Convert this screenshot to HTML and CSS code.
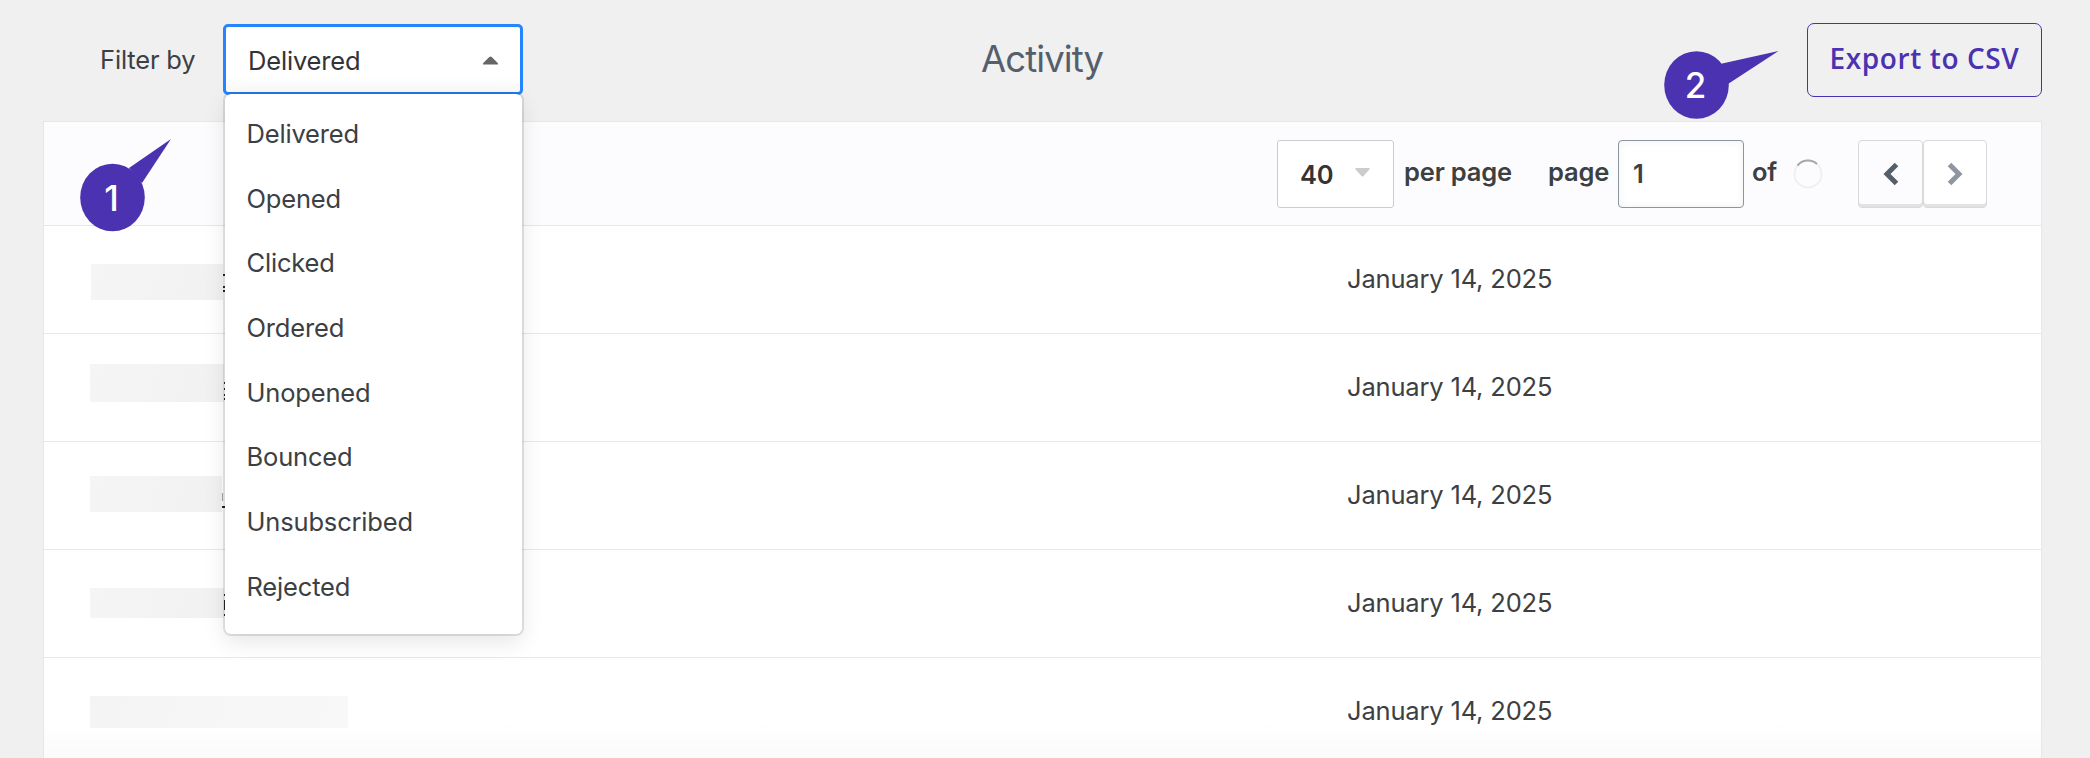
FILE: index.html
```html
<!DOCTYPE html>
<html lang="en">
<head>
<meta charset="utf-8">
<title>Activity</title>
<link rel="stylesheet" href="styles.css">
</head>
<body>
<header class="topbar">
  <div class="filter">
    <span class="filter-label">Filter by</span>
    <div class="select">
      <span class="select-value">Delivered</span>
      <svg class="caret-up" width="15" height="9" viewBox="0 0 15 9"><path d="M0 8Q0 7 1 6.3L6.3 1Q7.5 0 8.7 1L14 6.3Q15 7 15 8V8.500H0Z" fill="#666"/></svg>
      <ul class="menu">
        <li>Delivered</li>
        <li>Opened</li>
        <li>Clicked</li>
        <li>Ordered</li>
        <li>Unopened</li>
        <li>Bounced</li>
        <li>Unsubscribed</li>
        <li>Rejected</li>
      </ul>
    </div>
  </div>
  <h1 class="title">Activity</h1>
  <div class="actions"><button class="export">Export to CSV</button></div>
</header>
<main class="panel">
  <div class="pager">
    <div class="per-page"><span>40</span><svg width="15" height="9" viewBox="0 0 15 9"><path d="M0.500 0H14.500Q15 1 14 2L8.500 8Q7.500 9 6.500 8L1 2Q0 1 0.500 0Z" fill="#ccc"/></svg></div>
    <span class="lbl lbl-per">per page</span>
    <span class="lbl lbl-page">page</span>
    <div class="page-input">1</div>
    <span class="lbl lbl-of">of</span>
    <svg class="spinner" width="30" height="30" viewBox="0 0 30 30" fill="none" stroke-width="2"><circle cx="15" cy="15" r="13.500" stroke="#f0f0f1"/><path d="M4.500 6.500A13.500 13.500 0 0 1 24 5" stroke="#a6a8aa"/></svg>
    <div class="nav">
      <button class="nav-btn"><svg width="16" height="24" viewBox="0 0 16 24" fill="none" stroke="#555f6a" stroke-width="5"><path d="M13.500 2.500L4 12L13.500 21.500"/></svg></button>
      <button class="nav-btn next"><svg width="16" height="24" viewBox="0 0 16 24" fill="none" stroke="#8f96a1" stroke-width="5"><path d="M2.500 2.500L12 12L2.500 21.500"/></svg></button>
    </div>
  </div>
  <div class="row"><span class="mask m1"></span><span class="date">January 14, 2025</span></div>
  <div class="row"><span class="mask m2"></span><span class="date">January 14, 2025</span></div>
  <div class="row"><span class="mask m3"></span><span class="date">January 14, 2025</span></div>
  <div class="row"><span class="mask m4"></span><span class="date">January 14, 2025</span></div>
  <div class="row"><span class="mask m5"></span><span class="date">January 14, 2025</span></div>
</main>
<div class="callout c1"><svg width="92" height="93" viewBox="0 0 92 93"><path d="M49 29L91 0L62 44Z" fill="#4b32b0"/><ellipse cx="32.500" cy="58.500" rx="32.300" ry="33.800" fill="#4b32b0"/></svg><span>1</span></div>
<div class="callout c2"><svg width="116" height="70" viewBox="0 0 116 70"><path d="M56 13L114.500 0L64 33Z" fill="#4b32b0"/><ellipse cx="32.500" cy="34" rx="32.300" ry="33.800" fill="#4b32b0"/></svg><span>2</span></div>
</body>
</html>
```
FILE: styles.css
```css
* { box-sizing: border-box; }
body {
  margin: 0;
  height: 758px;
  overflow: hidden;
  position: relative;
  background: #f0f0f0;
  color: #3c4043;
  font: 25.5px/32px Inter, sans-serif;
  letter-spacing: -0.17px;
}
button { font: inherit; background: none; padding: 0; margin: 0; }
.topbar {
  display: grid;
  grid-template-columns: 881px auto 1fr;
  height: 121px;
  padding: 0 48px 0 100px;
}
.filter { display: flex; align-items: flex-start; padding-top: 24px; }
.filter-label { width: 123px; padding-top: 20px; }
.select {
  position: relative;
  width: 300px;
  height: 71px;
  display: flex;
  align-items: center;
  justify-content: space-between;
  padding: 2px 22px 0 22px;
  background: linear-gradient(#fff 75%, #f9f9f9);
  border: 3px solid #2684ff;
  border-radius: 5px;
  color: #333;
}
.menu {
  position: absolute;
  z-index: 2;
  left: -1px;
  top: 67px;
  width: 297px;
  height: 540px;
  margin: 0;
  padding: 8px 0;
  list-style: none;
  background: #fff;
  border-radius: 6px;
  box-shadow: 0 0 0 2px rgba(0,0,0,.1), 0 8px 22px rgba(0,0,0,.1);
  color: #3c4043;
}
.menu li { height: 64.700px; padding: 16px 21.500px; }
.title { margin: 0; padding-top: 37px; font-size: 36.500px; line-height: 44px; font-weight: 400; letter-spacing: -0.900px; color: #555f6b; }
.actions { display: flex; justify-content: flex-end; padding-top: 23px; }
.export {
  width: 235px;
  height: 74px;
  padding-bottom: 4px;
  border: 1px solid #4b32b0;
  border-radius: 7px;
  color: #4b32b0;
  font: 600 28px "Open Sans", sans-serif;
  letter-spacing: .6px;
}
.panel {
  margin: 0 48px 0 43px;
  height: 640px;
  border: 1px solid #e6e7e8;
  background: linear-gradient(#fff 600px, #fafafa);
}
.pager {
  display: flex;
  align-items: flex-start;
  height: 104px;
  padding: 18px 54px 0 0;
  justify-content: flex-end;
  background: #fcfcfe;
  border-bottom: 1px solid #e6e7e8;
  font-weight: 600;
}
.per-page {
  width: 117px;
  height: 68px;
  display: flex;
  align-items: center;
  justify-content: space-between;
  padding: 2px 23px 0 22px;
  background: #fff;
  border: 1px solid #ccc;
  border-radius: 3px;
  color: #333;
}
.per-page svg { margin-top: -6px; }
.lbl { padding-top: 16px; }
.lbl-per { width: 154px; padding-left: 10px; white-space: nowrap; }
.lbl-page { width: 70px; }
.page-input {
  width: 126px;
  height: 68px;
  padding: 17px 14px;
  background: #fff;
  border: 1px solid #8e93a0;
  border-radius: 4px;
  box-shadow: inset 0 0 8px rgba(0,0,0,.06);
}
.lbl-of { width: 49px; padding-left: 8px; }
.spinner { margin-top: 19px; }
.nav { display: flex; margin-left: 35px; }
.nav-btn {
  width: 65px;
  height: 68px;
  display: flex;
  align-items: center;
  justify-content: center;
  border: 1px solid #d9d9d9;
  border-radius: 4px;
  box-shadow: inset 0 -3px #e2e2e2;
}
.next { width: 64px; background: #fff; }
.row {
  display: grid;
  grid-template-columns: 1303px 1fr;
  height: 108px;
  border-bottom: 1px solid #e8e8ea;
}
.date { padding-top: 37px; }
.mask { position: relative; margin-left: 46px; background: linear-gradient(110deg, #f5f5f5, #f1f1f1); width: 134px; height: 36px; }
.m1 { margin-top: 38px; margin-left: 47px; width: 132px; }
.m2 { margin-top: 30px; height: 38px; }
.m3 { margin-top: 34px; width: 132px; }
.m4 { margin-top: 38px; height: 30px; }
.m5 { margin-top: 38px; width: 258px; height: 32px; background: linear-gradient(110deg, #f4f4f4, #f8f8f8); }
/* Edges of the link text left visible beside the masks */
.mask::after { content: ""; position: absolute; z-index: 3; left: 100%; width: 1px; }
.m1::after { top: 10px; width: 2px; height: 18px; background: linear-gradient(#222 2px, transparent 2px 12px, #222 12px 14px, transparent 14px 16px, #222 16px); }
.m2::after { top: 18px; height: 18px; background: linear-gradient(#222 2px, transparent 2px 6px, #222 6px 8px, transparent 8px 12px, #222 12px 14px, transparent 14px 16px, #222 16px); }
.m3::after { top: 17px; width: 3px; height: 15px; background: linear-gradient(90deg, #999 1px, transparent 1px) 0 0 / 3px 8px no-repeat, linear-gradient(#222, #222) 0 13px / 3px 2px no-repeat; }
.m4::after { top: 6px; height: 22px; background: linear-gradient(#222 2px, transparent 2px 6px, #222 6px 16px, transparent 16px 20px, #222 20px); }
.callout { position: absolute; color: #fff; font-size: 35px; font-weight: 500; line-height: 68px; }
.callout svg { display: block; }
.callout span { position: absolute; left: 0; width: 63px; text-align: center; }
.c1 { left: 80px; top: 139px; }
.c1 span { top: 25px; }
.c2 { left: 1664px; top: 51px; }
.c2 span { top: 0; }
```
